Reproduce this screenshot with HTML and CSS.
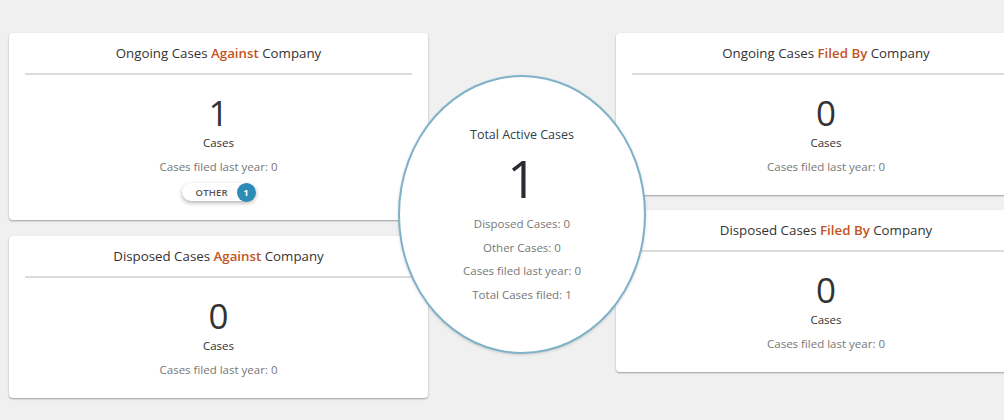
FILE: index.html
```html
<!DOCTYPE html>
<html>
<head>
<meta charset="utf-8">
<link rel="stylesheet" href="styles.css">
</head>
<body>
<div class="dashboard">
  <div class="col col-left">
    <div class="card card-tall">
      <div class="card-title">Ongoing Cases <span class="hl">Against</span> Company</div>
      <div class="divider"></div>
      <div class="card-body">
        <div class="num">1</div>
        <div class="label">Cases</div>
        <div class="sub">Cases filed last year: 0</div>
        <div class="chip"><span class="chip-text">OTHER</span><span class="badge">1</span></div>
      </div>
    </div>
    <div class="card">
      <div class="card-title">Disposed Cases <span class="hl">Against</span> Company</div>
      <div class="divider"></div>
      <div class="card-body">
        <div class="num">0</div>
        <div class="label">Cases</div>
        <div class="sub">Cases filed last year: 0</div>
      </div>
    </div>
  </div>
  <div class="col col-center">
    <div class="circle">
      <div class="circle-title">Total Active Cases</div>
      <div class="circle-num">1</div>
      <div class="circle-line">Disposed Cases: 0</div>
      <div class="circle-line">Other Cases: 0</div>
      <div class="circle-line">Cases filed last year: 0</div>
      <div class="circle-line">Total Cases filed: 1</div>
    </div>
  </div>
  <div class="col col-right">
    <div class="card">
      <div class="card-title">Ongoing Cases <span class="hl">Filed By</span> Company</div>
      <div class="divider"></div>
      <div class="card-body">
        <div class="num">0</div>
        <div class="label">Cases</div>
        <div class="sub">Cases filed last year: 0</div>
      </div>
    </div>
    <div class="card">
      <div class="card-title">Disposed Cases <span class="hl">Filed By</span> Company</div>
      <div class="divider"></div>
      <div class="card-body">
        <div class="num">0</div>
        <div class="label">Cases</div>
        <div class="sub">Cases filed last year: 0</div>
      </div>
    </div>
  </div>
</div>
</body>
</html>
```
FILE: styles.css
```css
html, body {
  margin: 0;
  padding: 0;
  overflow: hidden;
  background: #f0f0f0;
}
body {
  font-family: "Open Sans", "Noto Sans", sans-serif;
  color: #333;
  width: 1004px;
  height: 420px;
}
.dashboard {
  display: grid;
  grid-template-columns: 419px 188px 420px;
  padding: 33px 0 0 9px;
  width: max-content;
}
.col {
  display: flex;
  flex-direction: column;
}
.col-left { gap: 16px; }
.col-right { gap: 15px; }
.card {
  background: #fff;
  border-radius: 4px;
  box-shadow: 0 1px 2px rgba(0,0,0,0.35);
}
.card-title {
  height: 40px;
  line-height: 40px;
  text-align: center;
  font-size: 13.3px;
  color: #333;
}
.hl {
  color: #c4541d;
  font-weight: 600;
}
.divider {
  height: 2px;
  background: #dcdcdc;
  margin: 0 16px;
}
.card-body {
  display: flex;
  flex-direction: column;
  align-items: center;
  padding: 18px 0 18px;
}
.num {
  font-size: 35px;
  line-height: 40px;
  color: #333;
  font-weight: 400;
}
.label {
  font-size: 11.5px;
  line-height: 20px;
  color: #333;
}
.sub {
  font-size: 11.5px;
  line-height: 20px;
  margin-top: 4px;
  color: #777;
}
.chip {
  margin-top: 6px;
  margin-bottom: 1px;
  height: 18px;
  width: 74px;
  border-radius: 9px;
  background: #fff;
  box-shadow: 0 2px 4px rgba(0,0,0,0.3);
  display: flex;
  align-items: center;
  justify-content: space-between;
  box-sizing: border-box;
  padding-left: 14px;
}
.chip-text {
  font-size: 9.5px;
  font-weight: 600;
  color: #555;
  letter-spacing: 0.2px;
}
.badge {
  width: 19px;
  height: 19px;
  border-radius: 50%;
  background: #2c8cb6;
  color: #fff;
  font-size: 9.5px;
  font-weight: 700;
  display: flex;
  align-items: center;
  justify-content: center;
}
.col-center {
  align-items: center;
}
.circle {
  position: relative;
  z-index: 2;
  margin: 42px -30px 0;
  width: 248px;
  height: 279px;
  box-sizing: border-box;
  border: 2px solid #7fb2c8;
  border-radius: 50%;
  background: #fff;
  box-shadow: 0 1px 3px rgba(0,0,0,0.15);
  display: flex;
  flex-direction: column;
  align-items: center;
  padding-top: 48px;
}
.circle-title {
  font-size: 12.5px;
  line-height: 20px;
  color: #2f3f4c;
}
.circle-num {
  font-size: 52px;
  line-height: 58px;
  margin-top: 4px;
  color: #2b2b33;
  font-weight: 400;
}
.circle-line {
  font-size: 11.5px;
  line-height: 23.5px;
  color: #777;
}
.circle-num + .circle-line {
  margin-top: 5px;
}
```
